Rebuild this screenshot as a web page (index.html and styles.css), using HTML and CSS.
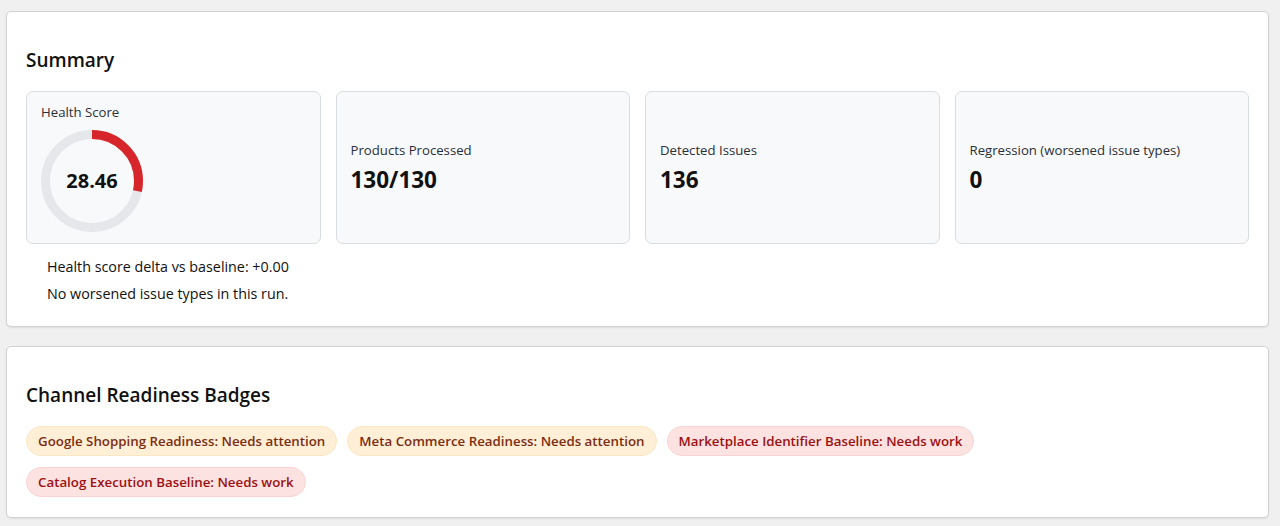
FILE: index.html
```html
<!DOCTYPE html>
<html>
<head>
  <title>Run Summary</title>
  <link rel="stylesheet" href="styles.css">
</head>
<body>
  <div class="page">
    <section class="panel">
      <h2>Summary</h2>
      <div class="stats">
        <div class="stat stat-health">
          <div class="stat-label">Health Score</div>
          <div class="gauge">
            <svg width="102" height="102" viewBox="0 0 102 102">
              <circle cx="51" cy="51" r="46.5" fill="none" stroke="#e5e7eb" stroke-width="9"/>
              <circle cx="51" cy="51" r="46.5" fill="none" stroke="#d7262b" stroke-width="9"
                stroke-dasharray="83.15 292.17" transform="rotate(-90 51 51)"/>
            </svg>
            <span class="gauge-value">28.46</span>
          </div>
        </div>
        <div class="stat">
          <div class="stat-label">Products Processed</div>
          <div class="stat-value">130/130</div>
        </div>
        <div class="stat">
          <div class="stat-label">Detected Issues</div>
          <div class="stat-value">136</div>
        </div>
        <div class="stat">
          <div class="stat-label">Regression (worsened issue types)</div>
          <div class="stat-value">0</div>
        </div>
      </div>
      <div class="notes">
        <p>Health score delta vs baseline: +0.00</p>
        <p>No worsened issue types in this run.</p>
      </div>
    </section>

    <section class="panel">
      <h2>Channel Readiness Badges</h2>
      <div class="badges">
        <span class="badge badge-warn">Google Shopping Readiness: Needs attention</span>
        <span class="badge badge-warn">Meta Commerce Readiness: Needs attention</span>
        <span class="badge badge-bad">Marketplace Identifier Baseline: Needs work</span>
        <span class="badge badge-bad">Catalog Execution Baseline: Needs work</span>
      </div>
    </section>
  </div>
</body>
</html>
```

FILE: styles.css
```css
body {
  margin: 0;
  background-color: #f0f0f0;
  font-family: "Open Sans", "Noto Sans", sans-serif;
  color: #111;
}
.page {
  padding: 11px 11px 0 6px;
}
.panel {
  background-color: #fff;
  border: 1px solid #d2d2d2;
  border-radius: 5px;
  box-shadow: 0 1px 2px rgba(0, 0, 0, 0.08);
  padding: 20px 19px;
  margin-bottom: 19px;
}
.panel h2 {
  font-size: 19px;
  font-weight: 600;
  line-height: 28px;
  margin: 14px 0 17px;
}
.stats {
  display: grid;
  grid-template-columns: repeat(4, 1fr);
  gap: 15px;
}
.stat {
  background-color: #f8f9fb;
  border: 1px solid #d9dce0;
  border-radius: 7px;
  padding: 11px 14px;
  height: 153px;
  box-sizing: border-box;
  display: flex;
  flex-direction: column;
  justify-content: center;
}
.stat-health {
  justify-content: flex-start;
}
.stat-label {
  font-size: 13.2px;
  line-height: 18px;
  color: #2b2f36;
}
.stat-value {
  font-size: 22.5px;
  font-weight: 700;
  line-height: 30px;
  margin-top: 6px;
}
.gauge {
  position: relative;
  width: 102px;
  height: 102px;
  margin-top: 9px;
}
.gauge svg {
  display: block;
}
.gauge-value {
  position: absolute;
  left: 0;
  right: 0;
  top: 36px;
  text-align: center;
  font-size: 20px;
  font-weight: 700;
  line-height: 30px;
}
.notes {
  padding: 9px 0 0 21px;
  margin-bottom: -1px;
}
.notes p {
  margin: 0;
  font-size: 14.3px;
  line-height: 27px;
}
.badges {
  display: flex;
  flex-wrap: wrap;
  gap: 11px 10px;
}
.badge {
  display: inline-block;
  box-sizing: border-box;
  padding: 0 11px;
  height: 30px;
  line-height: 28px;
  border-radius: 15px;
  font-size: 13.3px;
  font-weight: 600;
}
.badge-warn {
  background-color: #ffefd6;
  color: #7c2d12;
  border: 1px solid #fde6c4;
}
.badge-bad {
  background-color: #fde2e2;
  color: #9b1111;
  border: 1px solid #fbd3d3;
}
```
